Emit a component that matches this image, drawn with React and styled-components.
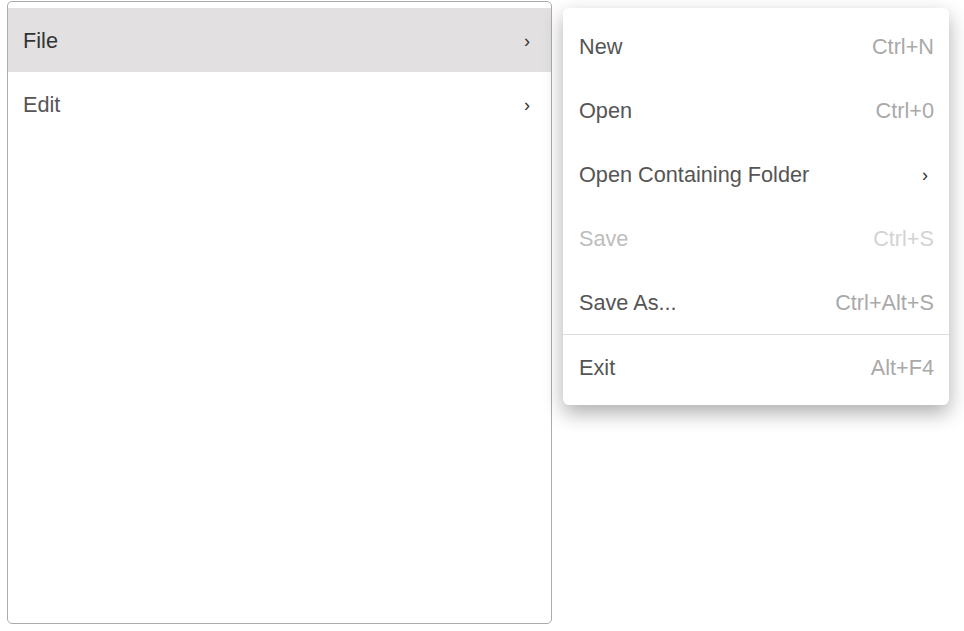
import React from "react";
import styled, { createGlobalStyle } from "styled-components";

const GlobalStyle = createGlobalStyle`
    html, body {
        margin: 0;
        padding: 0;
        background: #fff;
        font-family: "Liberation Sans", Arial, sans-serif;
    }
`;

const fileItems = [
    { label: "New", shortcut: "Ctrl+N" },
    { label: "Open", shortcut: "Ctrl+0" },
    { label: "Open Containing Folder", submenu: true },
    { label: "Save", shortcut: "Ctrl+S", disabled: true },
    { label: "Save As...", shortcut: "Ctrl+Alt+S", divider: true },
    { label: "Exit", shortcut: "Alt+F4" },
];

function App() {
    return (
        <>
            <GlobalStyle />
            <Page>
                <MenuPanel>
                    <MenuRow $active>
                        <RowLabel $active>File</RowLabel>
                        <Chevron>›</Chevron>
                    </MenuRow>
                    <MenuRow>
                        <RowLabel>Edit</RowLabel>
                        <Chevron>›</Chevron>
                    </MenuRow>
                </MenuPanel>
                <Popup>
                    {fileItems.map((item) => (
                        <PopupItem key={item.label} $divider={item.divider}>
                            <ItemLabel $disabled={item.disabled}>
                                {item.label}
                            </ItemLabel>
                            {item.submenu ? (
                                <Chevron $inPopup>›</Chevron>
                            ) : (
                                <Shortcut $disabled={item.disabled}>
                                    {item.shortcut}
                                </Shortcut>
                            )}
                        </PopupItem>
                    ))}
                </Popup>
            </Page>
        </>
    );
}

export default App;

const Page = styled.div`
    display: flex;
    align-items: flex-start;
    padding: 1px 0 0 7px;
    width: 964px;
    height: 631px;
    box-sizing: border-box;
`;

const MenuPanel = styled.div`
    width: 545px;
    height: 623px;
    box-sizing: border-box;
    border: 1px solid #ababab;
    border-radius: 5px;
    padding-top: 6px;
    display: flex;
    flex-direction: column;
    background: #fff;
`;

const MenuRow = styled.div`
    display: flex;
    align-items: center;
    justify-content: space-between;
    height: 64px;
    box-sizing: border-box;
    padding: 2px 21px 0 15px;
    background: ${({ $active }) => ($active ? "#e2e0e0" : "transparent")};
`;

const RowLabel = styled.span`
    font-size: 21.7px;
    color: ${({ $active }) => ($active ? "#333" : "#555")};
`;

const Chevron = styled.span`
    font-size: 18px;
    line-height: 1;
    color: #333;
    margin-right: ${({ $inPopup }) => ($inPopup ? "6px" : "0")};
`;

const Popup = styled.div`
    margin: 7px 0 0 11px;
    width: 386px;
    box-sizing: border-box;
    padding: 6px 0;
    background: #fff;
    border-radius: 6px;
    box-shadow: 0 8px 20px rgba(0, 0, 0, 0.32);
    display: flex;
    flex-direction: column;
`;

const PopupItem = styled.div`
    display: flex;
    align-items: center;
    justify-content: space-between;
    height: 64px;
    box-sizing: content-box;
    padding: 0 15px 0 16px;
    border-bottom: ${({ $divider }) =>
        $divider ? "1px solid #dcdcdc" : "none"};

    & > span {
        position: relative;
        top: 1px;
    }
`;

const ItemLabel = styled.span`
    font-size: 21.7px;
    color: ${({ $disabled }) => ($disabled ? "#bdbdbd" : "#555")};
`;

const Shortcut = styled.span`
    font-size: 21.7px;
    color: ${({ $disabled }) => ($disabled ? "#d3d3d3" : "#a9a9a9")};
`;
